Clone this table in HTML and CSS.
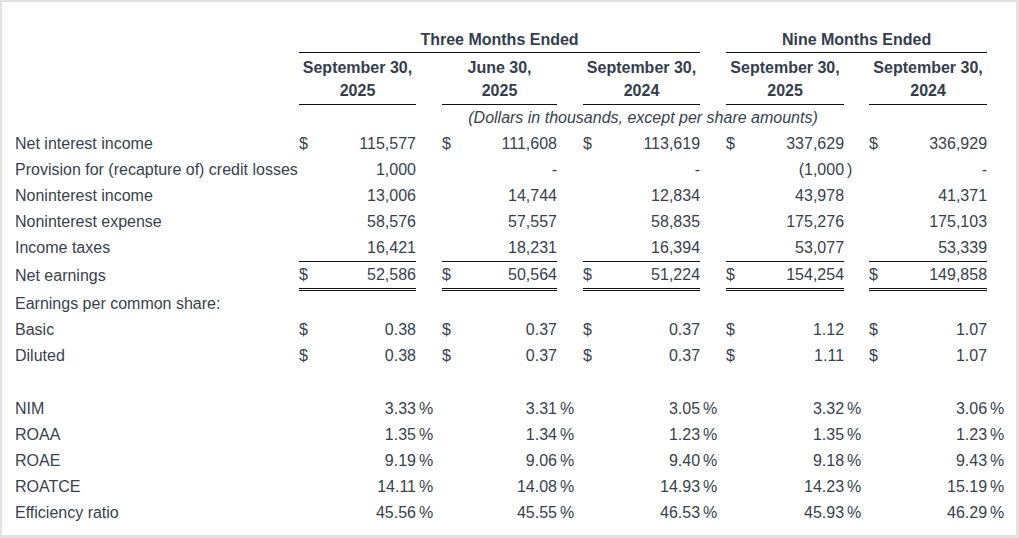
FILE: index.html
```html
<!DOCTYPE html>
<html lang="en">
<head>
<meta charset="utf-8">
<title>Financial Highlights</title>
<link rel="stylesheet" href="styles.css">
</head>
<body>
<div class="panel">
<table class="fin">
  <colgroup>
    <col class="c-label">
    <col class="c-d117"><col class="c-gap">
    <col class="c-d115"><col class="c-gap">
    <col class="c-d117"><col class="c-gap">
    <col class="c-d118"><col class="c-gap25">
    <col class="c-d118"><col class="c-end">
  </colgroup>
  <thead>
    <tr class="h-period">
      <th></th>
      <th colspan="5" class="ul">Three Months Ended</th>
      <th></th>
      <th colspan="3" class="ul">Nine Months Ended</th>
      <th></th>
    </tr>
    <tr class="h-date">
      <th></th>
      <th class="ul">September 30,<br>2025</th><th></th>
      <th class="ul">June 30,<br>2025</th><th></th>
      <th class="ul">September 30,<br>2024</th><th></th>
      <th class="ul">September 30,<br>2025</th><th></th>
      <th class="ul">September 30,<br>2024</th><th></th>
    </tr>
    <tr class="h-note">
      <th></th><th></th><th></th>
      <th colspan="5" class="note">(Dollars in thousands, except per share amounts)</th>
      <th></th><th></th><th></th>
    </tr>
  </thead>
  <tbody>
    <tr>
      <td class="lbl">Net interest income</td>
      <td class="num"><span class="cur">$</span>115,577</td><td></td>
      <td class="num"><span class="cur">$</span>111,608</td><td></td>
      <td class="num"><span class="cur">$</span>113,619</td><td></td>
      <td class="num"><span class="cur">$</span>337,629</td><td></td>
      <td class="num"><span class="cur">$</span>336,929</td><td></td>
    </tr>
    <tr>
      <td class="lbl">Provision for (recapture of) credit losses</td>
      <td class="num">1,000</td><td></td>
      <td class="num dash">-</td><td></td>
      <td class="num dash">-</td><td></td>
      <td class="num">(1,000</td><td class="suf">)</td>
      <td class="num dash">-</td><td></td>
    </tr>
    <tr>
      <td class="lbl">Noninterest income</td>
      <td class="num">13,006</td><td></td>
      <td class="num">14,744</td><td></td>
      <td class="num">12,834</td><td></td>
      <td class="num">43,978</td><td></td>
      <td class="num">41,371</td><td></td>
    </tr>
    <tr>
      <td class="lbl">Noninterest expense</td>
      <td class="num">58,576</td><td></td>
      <td class="num">57,557</td><td></td>
      <td class="num">58,835</td><td></td>
      <td class="num">175,276</td><td></td>
      <td class="num">175,103</td><td></td>
    </tr>
    <tr>
      <td class="lbl">Income taxes</td>
      <td class="num">16,421</td><td></td>
      <td class="num">18,231</td><td></td>
      <td class="num">16,394</td><td></td>
      <td class="num">53,077</td><td></td>
      <td class="num">53,339</td><td></td>
    </tr>
    <tr class="total">
      <td class="lbl">Net earnings</td>
      <td class="num tot"><span class="cur">$</span>52,586</td><td></td>
      <td class="num tot"><span class="cur">$</span>50,564</td><td></td>
      <td class="num tot"><span class="cur">$</span>51,224</td><td></td>
      <td class="num tot"><span class="cur">$</span>154,254</td><td></td>
      <td class="num tot"><span class="cur">$</span>149,858</td><td></td>
    </tr>
    <tr>
      <td class="lbl">Earnings per common share:</td>
      <td></td><td></td><td></td><td></td><td></td><td></td><td></td><td></td><td></td><td></td>
    </tr>
    <tr>
      <td class="lbl">Basic</td>
      <td class="num"><span class="cur">$</span>0.38</td><td></td>
      <td class="num"><span class="cur">$</span>0.37</td><td></td>
      <td class="num"><span class="cur">$</span>0.37</td><td></td>
      <td class="num"><span class="cur">$</span>1.12</td><td></td>
      <td class="num"><span class="cur">$</span>1.07</td><td></td>
    </tr>
    <tr>
      <td class="lbl">Diluted</td>
      <td class="num"><span class="cur">$</span>0.38</td><td></td>
      <td class="num"><span class="cur">$</span>0.37</td><td></td>
      <td class="num"><span class="cur">$</span>0.37</td><td></td>
      <td class="num"><span class="cur">$</span>1.11</td><td></td>
      <td class="num"><span class="cur">$</span>1.07</td><td></td>
    </tr>
    <tr class="spacer">
      <td></td><td></td><td></td><td></td><td></td><td></td><td></td><td></td><td></td><td></td><td></td>
    </tr>
    <tr>
      <td class="lbl">NIM</td>
      <td class="num">3.33</td><td class="suf">%</td>
      <td class="num">3.31</td><td class="suf">%</td>
      <td class="num">3.05</td><td class="suf">%</td>
      <td class="num">3.32</td><td class="suf">%</td>
      <td class="num">3.06</td><td class="suf">%</td>
    </tr>
    <tr>
      <td class="lbl">ROAA</td>
      <td class="num">1.35</td><td class="suf">%</td>
      <td class="num">1.34</td><td class="suf">%</td>
      <td class="num">1.23</td><td class="suf">%</td>
      <td class="num">1.35</td><td class="suf">%</td>
      <td class="num">1.23</td><td class="suf">%</td>
    </tr>
    <tr>
      <td class="lbl">ROAE</td>
      <td class="num">9.19</td><td class="suf">%</td>
      <td class="num">9.06</td><td class="suf">%</td>
      <td class="num">9.40</td><td class="suf">%</td>
      <td class="num">9.18</td><td class="suf">%</td>
      <td class="num">9.43</td><td class="suf">%</td>
    </tr>
    <tr>
      <td class="lbl">ROATCE</td>
      <td class="num">14.11</td><td class="suf">%</td>
      <td class="num">14.08</td><td class="suf">%</td>
      <td class="num">14.93</td><td class="suf">%</td>
      <td class="num">14.23</td><td class="suf">%</td>
      <td class="num">15.19</td><td class="suf">%</td>
    </tr>
    <tr>
      <td class="lbl">Efficiency ratio</td>
      <td class="num">45.56</td><td class="suf">%</td>
      <td class="num">45.55</td><td class="suf">%</td>
      <td class="num">46.53</td><td class="suf">%</td>
      <td class="num">45.93</td><td class="suf">%</td>
      <td class="num">46.29</td><td class="suf">%</td>
    </tr>
  </tbody>
</table>
</div>
</body>
</html>
```

FILE: styles.css
```css
html, body {
  margin: 0;
  padding: 0;
}

body {
  background: #e1e1e1;
  font-family: "Liberation Sans", Arial, sans-serif;
  font-size: 16px;
  color: #383f4d;
  padding: 2px 3px 3px 2px;
  width: 1019px;
  height: 538px;
  box-sizing: border-box;
}

.panel {
  background: #ffffff;
  height: 533px;
  width: 1014px;
  box-sizing: border-box;
  padding: 25px 0 0 13px;
}

.fin {
  border-collapse: separate;
  border-spacing: 0;
  table-layout: fixed;
  width: 1000px;
}

.c-label { width: 284px; }
.c-d117 { width: 117px; }
.c-d115 { width: 115px; }
.c-d118 { width: 118px; }
.c-gap { width: 26px; }
.c-gap25 { width: 25px; }
.c-end { width: 28px; }

.fin th,
.fin td {
  padding: 0;
  white-space: nowrap;
}

.fin th {
  font-weight: bold;
  text-align: center;
  color: #343d4d;
}

.h-period th {
  height: 25px;
  line-height: 25px;
  vertical-align: middle;
}

.h-date th {
  line-height: 23px;
  padding: 3px 0 2px;
}

.ul {
  border-bottom: 1px solid #111;
}

.h-note th {
  height: 26px;
}

.fin th.note {
  font-weight: normal;
  font-style: italic;
  line-height: 26px;
  color: #383f4d;
}

.fin td {
  height: 26px;
  line-height: 26px;
}

.lbl {
  text-align: left;
}

.num {
  text-align: right;
}

.cur {
  float: left;
}

.dash {
  padding-right: 3px;
}

.fin td.suf {
  text-align: left;
  padding-left: 3px;
}

.total td {
  height: 26px;
}

.tot {
  border-top: 1px solid #111;
  border-bottom: 3px double #111;
}

.spacer td {
  height: 27px;
}
```
